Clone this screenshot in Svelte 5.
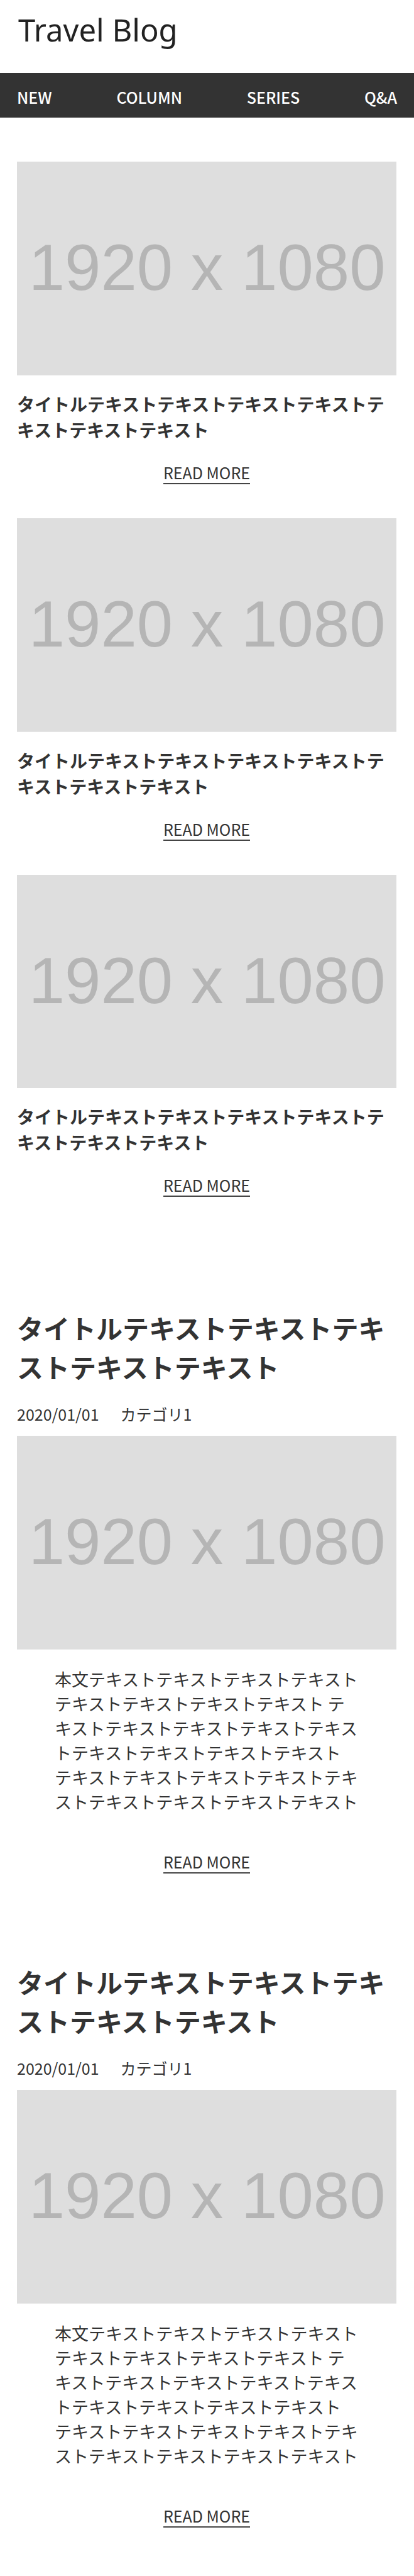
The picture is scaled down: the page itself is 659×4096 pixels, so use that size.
<script>
  const navItems = ['NEW', 'COLUMN', 'SERIES', 'Q&A'];
  const title = 'タイトル' + 'テキスト'.repeat(7);
  const articleTitle = 'タイトル' + 'テキスト'.repeat(5);
  const body = '本文' + 'テキスト'.repeat(8) + ' ' + 'テキスト'.repeat(9);
  const bodyEnd = 'テキスト'.repeat(9);
  const cards = [1, 2, 3];
  const articles = [1, 2];
</script>

{#snippet thumbnail()}
  <svg class="thumb" viewBox="0 0 1920 1080" role="img" aria-label="1920 x 1080">
    <rect width="1920" height="1080" fill="#dedede" />
    <text x="962" y="648" text-anchor="middle" font-size="328" fill="#b5b5b5">1920 x 1080</text>
  </svg>
{/snippet}

<header>
  <h1><a href="#top">Travel Blog</a></h1>
</header>

<nav>
  <ul>
    {#each navItems as item}
      <li><a href="#top">{item}</a></li>
    {/each}
  </ul>
</nav>

<main>
  <section class="cards">
    {#each cards as card (card)}
      <article class="card">
        {@render thumbnail()}
        <h2>{title}</h2>
        <p class="more"><a href="#top">READ MORE</a></p>
      </article>
    {/each}
  </section>

  <section class="articles">
    {#each articles as article (article)}
      <article class="post">
        <h2>{articleTitle}</h2>
        <div class="meta">
          <time datetime="2020-01-01">2020/01/01</time>
          <span>カテゴリ1</span>
        </div>
        {@render thumbnail()}
        <p class="body">{body}<br />{bodyEnd}</p>
        <p class="more"><a href="#top">READ MORE</a></p>
      </article>
    {/each}
  </section>
</main>

<style>
  :global(body) {
    margin: 0;
    background: #fff;
    color: #333;
    font-family: 'Noto Sans CJK JP', sans-serif;
    font-size: 25px;
    line-height: 36px;
  }

  h1, h2, p, ul {
    margin: 0;
    padding: 0;
  }

  a {
    color: inherit;
    text-decoration: none;
  }

  header {
    padding: 13px 29px 35px;
  }

  h1 {
    color: #222;
    font-family: 'Noto Sans', sans-serif;
    font-size: 49px;
    font-weight: 400;
    line-height: 68px;
  }

  nav {
    padding: 20px 27px 15px;
    background: #333;
    color: #fff;
    font-weight: 500;
  }

  ul {
    display: flex;
    justify-content: space-between;
    list-style: none;
  }

  main {
    padding: 70px 28px 77px 27px;
  }

  .thumb {
    display: block;
    width: 100%;
    aspect-ratio: 16 / 9;
    font-family: 'Liberation Sans', Arial, sans-serif;
  }

  .cards {
    display: flex;
    flex-direction: column;
    gap: 54px;
  }

  .card h2 {
    margin: 25px 0 31px;
    font-size: 28px;
    font-weight: 700;
    line-height: 41px;
  }

  .more {
    display: flex;
    justify-content: center;
  }

  .more a {
    border-bottom: 2px solid #444;
    line-height: 33px;
  }

  .articles {
    display: flex;
    flex-direction: column;
    gap: 141px;
    margin-top: 177px;
  }

  .post h2 {
    font-size: 42px;
    font-weight: 700;
    line-height: 62px;
  }

  .meta {
    display: flex;
    gap: 34px;
    margin: 26px 0 17px;
  }

  .body {
    margin: 27px 0 60px;
    padding: 0 58px 0 60px;
    font-size: 27px;
    line-height: 39px;
  }
</style>
